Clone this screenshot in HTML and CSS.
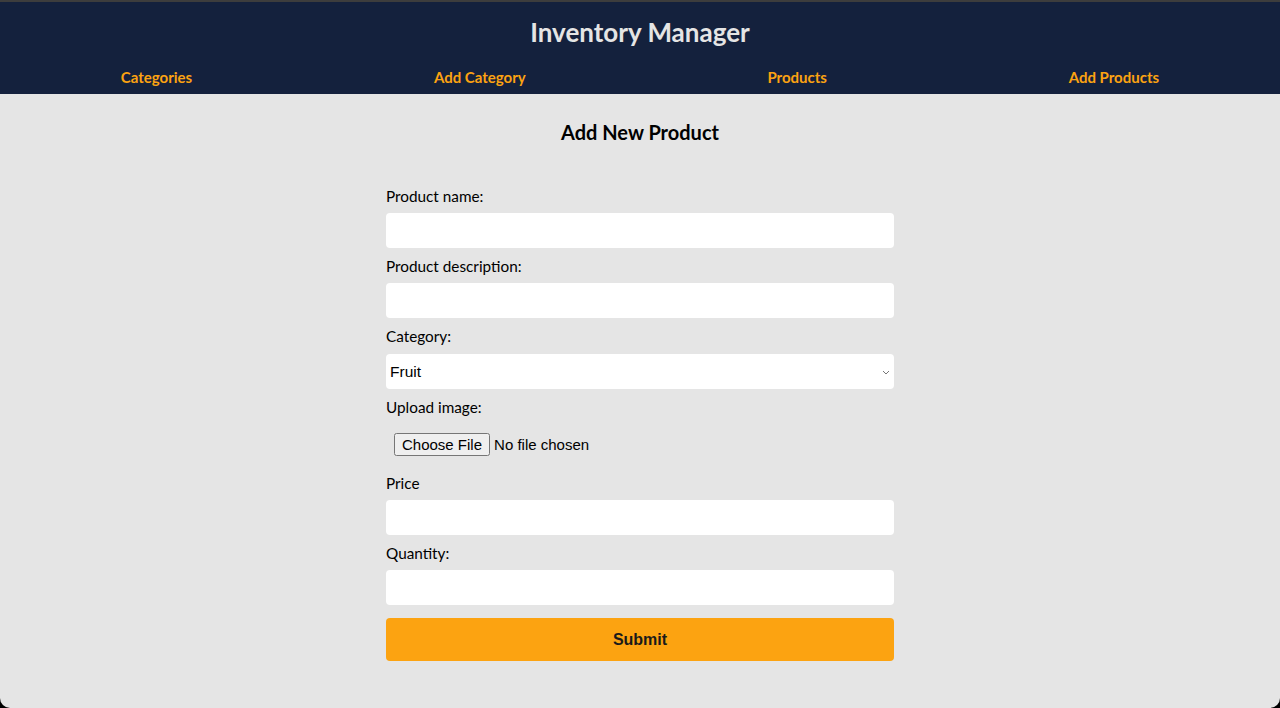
FILE: index.html
```html
<!DOCTYPE html>
<html lang="en">
<head>
<meta charset="utf-8">
<title>Inventory Manager</title>
<link rel="stylesheet" href="styles.css">
</head>
<body>
<div class="window">
  <header class="header">
    <h1 class="brand">Inventory Manager</h1>
    <nav class="nav">
      <a href="#" class="nav-link">Categories</a>
      <a href="#" class="nav-link">Add Category</a>
      <a href="#" class="nav-link">Products</a>
      <a href="#" class="nav-link">Add Products</a>
    </nav>
  </header>
  <main class="main">
    <h2 class="page-title">Add New Product</h2>
    <form class="form">
      <label class="label" for="name">Product name:</label>
      <input class="field" id="name" type="text">
      <label class="label" for="desc">Product description:</label>
      <input class="field" id="desc" type="text">
      <label class="label" for="cat">Category:</label>
      <div class="select-wrap">
        <select class="field select" id="cat">
          <option>Fruit</option>
          <option>Vegetables</option>
        </select>
        <svg class="chevron" width="8" height="5" viewBox="0 0 8 5" aria-hidden="true"><path d="M1 1l3 3 3-3" fill="none" stroke="#777" stroke-width="1"/></svg>
      </div>
      <label class="label" for="img">Upload image:</label>
      <input class="file" id="img" type="file">
      <label class="label" for="price">Price</label>
      <input class="field" id="price" type="text">
      <label class="label" for="qty">Quantity:</label>
      <input class="field" id="qty" type="text">
      <button class="submit" type="button">Submit</button>
    </form>
  </main>
</div>
</body>
</html>
```
FILE: styles.css
```css
* { box-sizing: border-box; }
html, body {
  margin: 0;
  padding: 0;
  background: #000;
}
.window {
  min-height: 708px;
  background: #e5e5e5;
  border-top: 2px solid #3d3d3d;
  border-radius: 0 0 10px 10px;
  overflow: hidden;
  font-family: Lato, "Noto Sans", sans-serif;
  color: #000;
}
.header {
  background: #14213d;
  padding: 14px 0 8px;
}
.brand {
  margin: 0 0 20px;
  text-align: center;
  font-size: 26px;
  line-height: 32px;
  font-weight: 700;
  color: #e5e5e5;
}
.nav {
  display: flex;
  justify-content: space-around;
}
.nav-link {
  font-size: 15px;
  line-height: 18px;
  font-weight: 700;
  color: #fca311;
  text-decoration: none;
}
.main {
  padding: 26px 0 40px;
}
.page-title {
  margin: 0;
  text-align: center;
  font-size: 20px;
  line-height: 24px;
  font-weight: 700;
}
.form {
  width: 508px;
  margin: 42px auto 0;
  display: flex;
  flex-direction: column;
  gap: 8px;
}
.label {
  font-size: 15.3px;
  line-height: 18px;
  padding-top: 1px;
}
.field {
  height: 35px;
  border: none;
  border-radius: 4px;
  background: #fff;
  font-family: "Liberation Sans", Arial, sans-serif;
  font-size: 16px;
  padding: 0 8px;
}
.select-wrap {
  position: relative;
  margin-top: 1px;
  display: flex;
  flex-direction: column;
}
.select {
  appearance: none;
  -webkit-appearance: none;
  padding: 0 4px;
  color: #000;
  font-size: 15.5px;
}
.chevron {
  position: absolute;
  right: 4px;
  top: 16px;
}
.file {
  font-family: "Liberation Sans", Arial, sans-serif;
  font-size: 15px;
  padding: 9px 8px 9px;
}
.submit {
  margin-top: 5px;
  height: 43px;
  border: none;
  border-radius: 4px;
  background: #fca311;
  color: #1a1a1a;
  font-family: "Liberation Sans", Arial, sans-serif;
  font-size: 16px;
  font-weight: 700;
}
```
